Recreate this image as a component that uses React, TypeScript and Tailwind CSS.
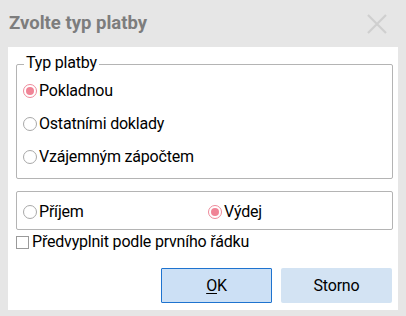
import React from "react";

function Radio({ checked }: { checked?: boolean }) {
  return (
    <span className={`inline-flex w-[14px] h-[14px] rounded-full border items-center justify-center shrink-0 bg-white ${checked ? "border-[#ee8a9a]" : "border-[#a8a8a8]"}`}>
      {checked && <span className="w-[8px] h-[8px] rounded-full bg-[#f08496]" />}
    </span>
  );
}

export default function App() {
  return (
    <div className="w-[406px] h-[316px] bg-[#e6e6e6] flex flex-col" style={{ fontFamily: 'Roboto, "Noto Sans", sans-serif' }}>
      <div className="h-[47px] flex items-center justify-between pl-[9px] pr-[18px]">
        <span className="text-[18.5px] font-bold text-[#7d7d7d] leading-none">Zvolte typ platby</span>
        <svg width="22" height="22" viewBox="0 0 22 22">
          <path d="M2 2 L20 20 M20 2 L2 20" stroke="#cfcfcf" strokeWidth="2.2" />
        </svg>
      </div>
      <div className="mx-[8px] mb-[6px] flex-1 bg-white flex flex-col px-[8px] pt-[17px] text-[16px] text-black leading-none tracking-[-0.2px]">
        <div className="relative border border-[#b4b4b4] rounded-[2px] h-[115px] w-[377px] pt-[18px] pl-[6px] flex flex-col gap-[17px]">
          <span className="absolute left-[7px] top-[-10px] bg-white px-[2px]">Typ platby</span>
          <div className="flex items-center gap-[2px]"><Radio checked /><span>Pokladnou</span></div>
          <div className="flex items-center gap-[2px]"><Radio /><span>Ostatními doklady</span></div>
          <div className="flex items-center gap-[2px]"><Radio /><span>Vzájemným zápočtem</span></div>
        </div>
        <div className="mt-[12px] border border-[#b4b4b4] rounded-[2px] h-[39px] w-[377px] pl-[6px] pt-[2px] flex items-center">
          <div className="flex items-center gap-[2px] w-[185px]"><Radio /><span>Příjem</span></div>
          <div className="flex items-center gap-[2px]"><Radio checked /><span>Výdej</span></div>
        </div>
        <div className="mt-[4px] flex items-center gap-[3px]">
          <span className="w-[13px] h-[13px] border border-[#9a9a9a] bg-white" />
          <span>Předvyplnit podle prvního řádku</span>
        </div>
        <div className="mt-[18px] flex justify-end gap-[9px] -mr-[2px]">
          <button className="w-[111px] h-[35px] bg-[#cce0f5] border border-[#1e73cf] rounded-[1px] text-[16px]"><span className="underline underline-offset-2">O</span>K</button>
          <button className="w-[111px] h-[35px] bg-[#d3e3f3] rounded-[2px] text-[16px]">Storno</button>
        </div>
      </div>
    </div>
  );
}
